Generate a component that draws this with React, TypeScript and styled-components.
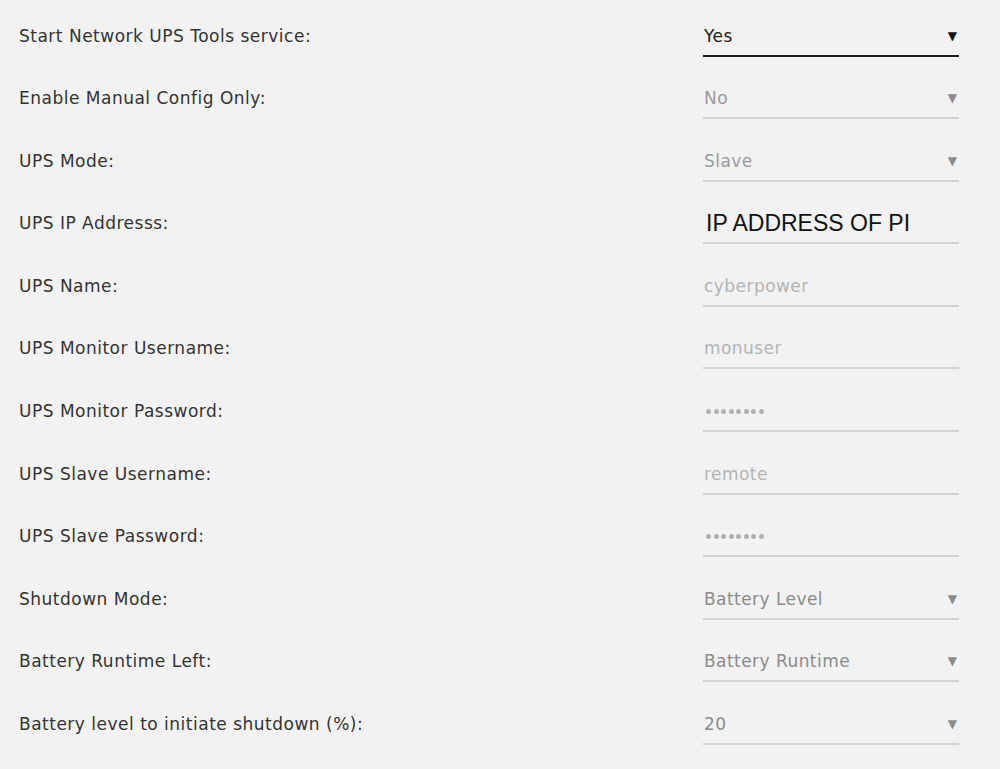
import styled, { createGlobalStyle } from 'styled-components';

const GlobalStyle = createGlobalStyle`
  html, body {
    margin: 0;
    background: #f2f2f2;
  }
  body {
    font-family: "DejaVu Sans", "Open Sans", sans-serif;
  }
`

const Form = styled.form`
  padding: 0 41px 0 19px;
`

const Row = styled.div`
  display: grid;
  grid-template-columns: 1fr 256px;
  align-items: start;
  height: 62.6px;
  padding-top: 18.5px;
  box-sizing: border-box;
`

const Label = styled.label`
  font-size: 17px;
  letter-spacing: 0.5px;
  line-height: 34px;
  color: #333;
`

const Field = styled.div<{ $active?: boolean }>`
  display: flex;
  align-items: center;
  justify-content: space-between;
  height: 38px;
  box-sizing: border-box;
  border-bottom: 2px solid ${p => (p.$active ? '#1c1c1c' : '#d2d2d2')};
  padding: 0 2px 2px 1px;
`

type Tone = 'active' | 'muted' | 'dim' | 'placeholder' | 'typed'

const toneColor: Record<Tone, string> = {
  active: '#1c1c1c',
  muted: '#9a9a9a',
  dim: '#8a8a8a',
  placeholder: '#b4b4b4',
  typed: '#111',
}

const Value = styled.span<{ $tone: Tone }>`
  font-size: ${p => (p.$tone === 'typed' ? '23px' : '17px')};
  letter-spacing: ${p => (p.$tone === 'typed' ? '0' : '0.45px')};
  font-family: ${p => (p.$tone === 'typed' ? '"Liberation Sans", Arial, sans-serif' : 'inherit')};
  color: ${p => toneColor[p.$tone]};
  padding-left: ${p => (p.$tone === 'typed' ? '2px' : '0')};
`

const Dots = styled.span`
  display: flex;
  gap: 2.5px;
  padding-left: 2px;

  i {
    width: 5px;
    height: 5px;
    border-radius: 50%;
    background: #b0b0b0;
  }
`

const Arrow = styled.span<{ $active?: boolean }>`
  font-size: 12px;
  color: ${p => (p.$active ? '#111' : '#8c8c8c')};
`

type Item = {
  label: string
  value: string
  kind: 'select' | 'text' | 'password'
  tone: Tone
  active?: boolean
}

const items: Item[] = [
  { label: 'Start Network UPS Tools service:', value: 'Yes', kind: 'select', tone: 'active', active: true },
  { label: 'Enable Manual Config Only:', value: 'No', kind: 'select', tone: 'muted' },
  { label: 'UPS Mode:', value: 'Slave', kind: 'select', tone: 'muted' },
  { label: 'UPS IP Addresss:', value: 'IP ADDRESS OF PI', kind: 'text', tone: 'typed' },
  { label: 'UPS Name:', value: 'cyberpower', kind: 'text', tone: 'placeholder' },
  { label: 'UPS Monitor Username:', value: 'monuser', kind: 'text', tone: 'placeholder' },
  { label: 'UPS Monitor Password:', value: '', kind: 'password', tone: 'placeholder' },
  { label: 'UPS Slave Username:', value: 'remote', kind: 'text', tone: 'placeholder' },
  { label: 'UPS Slave Password:', value: '', kind: 'password', tone: 'placeholder' },
  { label: 'Shutdown Mode:', value: 'Battery Level', kind: 'select', tone: 'dim' },
  { label: 'Battery Runtime Left:', value: 'Battery Runtime', kind: 'select', tone: 'dim' },
  { label: 'Battery level to initiate shutdown (%):', value: '20', kind: 'select', tone: 'dim' },
]

export default function App() {
  return (
    <>
      <GlobalStyle />
      <Form>
        {items.map(item => (
          <Row key={item.label}>
            <Label>{item.label}</Label>
            <Field $active={item.active}>
              {item.kind === 'password' ? (
                <Dots>
                  {Array.from({ length: 8 }).map((_, i) => <i key={i} />)}
                </Dots>
              ) : (
                <Value $tone={item.tone}>{item.value}</Value>
              )}
              {item.kind === 'select' && <Arrow $active={item.active}>▼</Arrow>}
            </Field>
          </Row>
        ))}
      </Form>
    </>
  )
}
